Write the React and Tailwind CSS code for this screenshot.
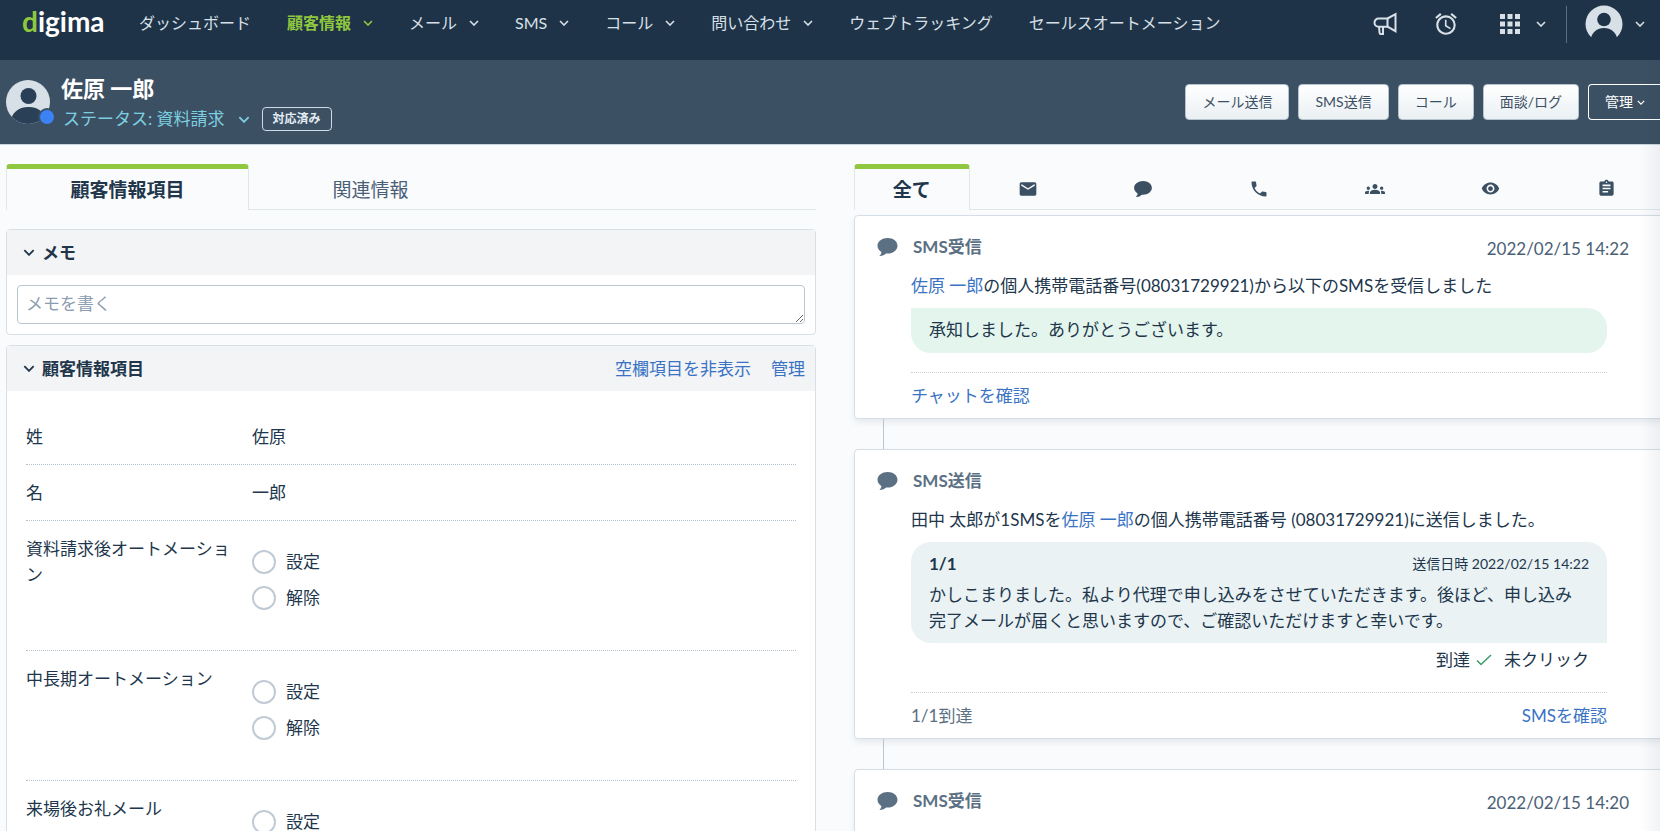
import React from 'react';
import { MdAlarm, MdApps, MdAssignment, MdEmail, MdGroups, MdPhone, MdVisibility } from 'react-icons/md';

const NAV_ITEMS = [
  { label: 'ダッシュボード' },
  { label: '顧客情報', menu: true, active: true },
  { label: 'メール', menu: true },
  { label: 'SMS', menu: true },
  { label: 'コール', menu: true },
  { label: '問い合わせ', menu: true },
  { label: 'ウェブトラッキング' },
  { label: 'セールスオートメーション' },
];

const ACTIONS = ['メール送信', 'SMS送信', 'コール', '面談/ログ'];

const FIELDS = [
  { label: '姓', value: '佐原' },
  { label: '名', value: '一郎' },
  { label: '資料請求後オートメーション', options: ['設定', '解除'] },
  { label: '中長期オートメーション', options: ['設定', '解除'] },
  { label: '来場後お礼メール', options: ['設定', '解除'] },
];

const TIMELINE_TABS = [
  { name: 'メール', icon: <MdEmail size={20} /> },
  { name: 'SMS', icon: <CommentIcon className="w-[18px] h-4" /> },
  { name: 'コール', icon: <MdPhone size={20} /> },
  { name: '面談', icon: <MdGroups size={20} /> },
  { name: '閲覧', icon: <MdVisibility size={19} /> },
  { name: 'ログ', icon: <MdAssignment size={19} /> },
];

function Chevron({ className }) {
  return (
    <svg viewBox="0 0 10 6" fill="none" stroke="currentColor" strokeWidth="1.6" className={className} aria-hidden="true">
      <path d="M1 1l4 4 4-4" />
    </svg>
  );
}

function CommentIcon({ className }) {
  return (
    <svg viewBox="0 0 20 18" fill="currentColor" className={className} aria-hidden="true">
      <path d="M10.2 0C4.700 0 0 3.300 0 7.700c0 2.600 1.500 4.900 3.900 6.300.1 1.200-.7 2.600-2 3.900 3 .1 5-.8 6.600-2.500.5.1 1.100.1 1.700.1C15.700 15.500 20 12 20 7.700S15.700 0 10.200 0z" />
    </svg>
  );
}

function MegaphoneIcon() {
  return (
    <svg viewBox="0 0 24 24" fill="none" stroke="currentColor" strokeWidth="2" className="w-6 h-6" aria-hidden="true">
      <path d="M14.500 6.500h-9a4 4 0 0 0-4 4v.2a4 4 0 0 0 4 4h9z" />
      <path d="M14.500 6.500L22.500 2.200v17l-8-4.500" />
      <path d="M6 14.700l.6 6.300a1 1 0 0 0 1 1h2.400v-7.300" />
    </svg>
  );
}

function Header() {
  return (
    <header className="flex items-start h-[60px] pl-[22px] pr-[15px] bg-[#1f3348] text-[#d8e0e7]">
      <a href="#" className="w-[81px] shrink-0 mt-1 text-[28px] leading-[34px] font-bold text-white">
        <span className="text-[#8fc73e]">d</span>igima
      </a>
      <nav className="flex gap-9 ml-9 h-[46px] items-center text-[16px] whitespace-nowrap">
        {NAV_ITEMS.map((item) => (
          <a
            key={item.label}
            href="#"
            className={item.active ? 'flex items-center font-bold text-[#8fc73e]' : 'flex items-center'}
          >
            {item.label}
            {item.menu && <Chevron className="ml-3 w-2.5 h-1.5" />}
          </a>
        ))}
      </nav>
      <div className="flex items-center ml-auto h-12">
        <button aria-label="お知らせ"><MegaphoneIcon /></button>
        <button aria-label="リマインダー" className="ml-9"><MdAlarm size={26} /></button>
        <button aria-label="アプリ" className="flex items-center ml-9">
          <MdApps size={30} />
          <Chevron className="ml-[11px] w-2.5 h-1.5" />
        </button>
        <span className="ml-5 h-[37px] w-px bg-[#5b7083]" />
        <button aria-label="アカウント" className="flex items-center ml-[18px]">
          <svg viewBox="0 0 38 38" className="w-[38px] h-[38px]" aria-hidden="true">
            <circle cx="19" cy="19" r="18.500" fill="#d8e0e7" />
            <circle cx="19" cy="14.500" r="6.800" fill="#1f3348" />
            <path d="M5 38c.5-9.500 6-15 14-15s13.500 5.500 14 15z" fill="#1f3348" />
          </svg>
          <Chevron className="ml-3 w-2.5 h-1.5" />
        </button>
      </div>
    </header>
  );
}

function CustomerBar() {
  return (
    <section className="flex items-center h-[85px] pl-1.5 bg-[#3c5064] border-b border-[#cbd6de]">
      <div className="relative shrink-0 w-[50px]">
        <svg viewBox="0 0 44 44" className="w-11 h-11" aria-hidden="true">
          <clipPath id="face"><circle cx="22" cy="22" r="22" /></clipPath>
          <g clipPath="url(#face)">
            <rect width="44" height="44" fill="#d8e0e7" />
            <circle cx="22.500" cy="16" r="8" fill="#2a4056" />
            <path d="M4 44c1-11 8-17 18.500-17S40 33 41 44z" fill="#2a4056" />
          </g>
        </svg>
        <span className="absolute -bottom-0.5 right-0 w-[18px] h-[18px] rounded-full bg-[#3b82f6] border-2 border-[#3c5064]" />
      </div>
      <div className="ml-[5px] whitespace-nowrap">
        <h1 className="text-[22px] leading-[34px] font-bold text-white">佐原 一郎</h1>
        <div className="flex items-center ml-0.5">
          <button className="flex items-center text-[17px] leading-[26px] text-[#7ccfe0]">
            ステータス: 資料請求
            <Chevron className="ml-[13px] w-3 h-[7px]" />
          </button>
          <span className="ml-3 px-2.5 border border-[#cbdbe8] rounded text-[12px] leading-[22px] font-bold text-[#e3ecf3]">
            対応済み
          </span>
        </div>
      </div>
      <div className="flex gap-[9px] ml-auto text-[14px] whitespace-nowrap">
        {ACTIONS.map((action) => (
          <button
            key={action}
            className="h-9 px-4 border border-[#b5c3cf] rounded bg-gradient-to-b from-white to-[#eaf0f3] text-[#3c5064]"
          >
            {action}
          </button>
        ))}
        <button className="flex items-center h-9 pl-4 pr-[15px] border border-r-0 border-white rounded-l text-white">
          管理
          <Chevron className="ml-1 w-2 h-[5px]" />
        </button>
      </div>
    </section>
  );
}

function PanelTitle({ children }) {
  return (
    <button className="flex items-center gap-[7px] font-bold">
      <Chevron className="w-3 h-[7px]" />
      {children}
    </button>
  );
}

function Field({ field, index }) {
  return (
    <div className="flex pt-[15px] pb-3.5 border-b border-dotted border-[#b4c2ce]">
      <div className="shrink-0 w-[226px] pr-5" id={`field-${index}`}>{field.label}</div>
      {field.value && <div>{field.value}</div>}
      {field.options && (
        <div role="radiogroup" aria-labelledby={`field-${index}`} className="flex flex-col gap-3 pt-[14px] pb-[26px]">
          {field.options.map((option) => (
            <label key={option} className="flex items-center gap-2.5 h-6">
              <input
                type="radio"
                name={`field-${index}`}
                className="appearance-none w-6 h-6 rounded-full border-2 border-[#c0cbd5] bg-white checked:border-8"
              />
              {option}
            </label>
          ))}
        </div>
      )}
    </div>
  );
}

function CustomerPanel() {
  return (
    <div>
      <div role="tablist" className="flex text-[19px]">
        <button
          role="tab"
          aria-selected="true"
          className="w-[30%] h-[46px] border-x border-t-[5px] border-x-[#dfe6ea] border-t-[#8fc73e] rounded-t font-bold"
        >
          顧客情報項目
        </button>
        <button role="tab" aria-selected="false" className="w-[30%] pt-1.5 border-b border-[#dfe6ea] text-[#4a6076]">
          関連情報
        </button>
        <div className="flex-1 border-b border-[#dfe6ea]" />
      </div>

      {/* メモ */}
      <section className="mt-[19px] border border-[#d8dfe5] rounded bg-white">
        <div className="flex items-center h-[45px] px-4 bg-[#f3f4f6]">
          <PanelTitle>メモ</PanelTitle>
        </div>
        <div className="flex p-2.5">
          <textarea
            rows={1}
            aria-label="メモ"
            placeholder="メモを書く"
            className="w-full h-[39px] px-2 py-[5px] border border-[#bac6d0] rounded bg-white placeholder:text-[#8b9db0]"
          />
        </div>
      </section>

      {/* 顧客情報 */}
      <section className="mt-2.5 border border-[#d8dfe5] rounded bg-white">
        <div className="flex items-center h-[45px] pl-4 pr-2.5 bg-[#f3f4f6]">
          <PanelTitle>顧客情報項目</PanelTitle>
          <a href="#" className="ml-auto text-[#3a73c4]">空欄項目を非表示</a>
          <a href="#" className="ml-5 text-[#3a73c4]">管理</a>
        </div>
        <div className="pt-[18px] px-[19px]">
          {FIELDS.map((field, i) => <Field key={field.label} field={field} index={i} />)}
        </div>
      </section>
    </div>
  );
}

function TimelineCard({ title, date, children }) {
  return (
    <li className="group">
      <article className="border border-[#d5dee6] rounded bg-white shadow-[0_4px_6px_rgba(90,120,140,0.12)]">
        <div className="flex items-center h-11 pl-[22px] pr-[34px] pt-[18px] text-[#5b7083]">
          <CommentIcon className="w-[21px] h-[18px]" />
          <h2 className="ml-[15px] font-bold">{title}</h2>
          {date && <time className="ml-auto pt-1 text-[#4a6076]">{date}</time>}
        </div>
        <div className="px-14 pt-[13px] pb-[9px]">{children}</div>
      </article>
      <div className="ml-[29px] w-px h-[30px] bg-[#b9c5cf] group-last:hidden" />
    </li>
  );
}

function CardFooter({ children }) {
  return (
    <div className="flex justify-between mt-[19px] pt-2.5 border-t border-dotted border-[#c5d0d9] text-[#5b7083]">
      {children}
    </div>
  );
}

function Timeline() {
  return (
    <div className="min-w-0">
      <div role="tablist" className="grid grid-cols-7 h-[46px] text-[#3c5064]">
        <button
          role="tab"
          aria-selected="true"
          className="border-x border-t-[5px] border-x-[#dfe6ea] border-t-[#8fc73e] rounded-t text-[19px] font-bold text-[#21364b]"
        >
          全て
        </button>
        {TIMELINE_TABS.map((tab) => (
          <button
            key={tab.name}
            role="tab"
            aria-selected="false"
            aria-label={tab.name}
            className="flex items-center justify-center pt-1 border-b border-[#dfe6ea]"
          >
            {tab.icon}
          </button>
        ))}
      </div>
      <ol className="mt-[5px]">
        <TimelineCard title="SMS受信" date="2022/02/15 14:22">
          <p><a href="#" className="text-[#3a73c4]">佐原 一郎</a>の個人携帯電話番号(08031729921)から以下のSMSを受信しました</p>
          <p className="mt-[9px] px-[18px] pt-[9px] pb-2.5 rounded-[20px] rounded-tl-none bg-[#e4f5ed]">
            承知しました。ありがとうございます。
          </p>
          <CardFooter>
            <a href="#" className="text-[#3a73c4]">チャットを確認</a>
          </CardFooter>
        </TimelineCard>

        <TimelineCard title="SMS送信">
          <p>田中 太郎が1SMSを<a href="#" className="text-[#3a73c4]">佐原 一郎</a>の個人携帯電話番号 (08031729921)に送信しました。</p>
          <div className="mt-[9px] px-[18px] py-[9px] rounded-[20px] rounded-br-none bg-[#eaf2f4]">
            <div className="flex justify-between">
              <strong>1/1</strong>
              <span className="text-[14px]">送信日時 2022/02/15 14:22</span>
            </div>
            <p className="mt-[5px]">
              かしこまりました。私より代理で申し込みをさせていただきます。後ほど、申し込み完了メールが届くと思いますので、ご確認いただけますと幸いです。
            </p>
          </div>
          <div className="flex items-center justify-end pt-1 pr-[18px]">
            到達
            <svg viewBox="0 0 16 12" fill="none" stroke="#3f9c6b" strokeWidth="1.600" className="ml-1.5 mr-3 w-4 h-3" aria-hidden="true">
              <path d="M1 6.500l4 4L15 1" />
            </svg>
            未クリック
          </div>
          <CardFooter>
            <span>1/1到達</span>
            <a href="#" className="text-[#3a73c4]">SMSを確認</a>
          </CardFooter>
        </TimelineCard>

        <TimelineCard title="SMS受信" date="2022/02/15 14:20" />
      </ol>
    </div>
  );
}

export default function App() {
  return (
    <div className="relative h-screen overflow-hidden bg-[#fafbfd] font-['Lato','Noto_Sans_CJK_JP',sans-serif] text-[17px] leading-[26px] text-[#21364b]">
      <Header />
      <CustomerBar />
      <main className="grid grid-cols-2 gap-[38px] pt-[19px] pl-1.5 -mr-1">
        <CustomerPanel />
        <Timeline />
      </main>
      <div className="absolute inset-y-0 right-0 w-5 bg-gradient-to-r from-transparent to-[#1f3348]/6 pointer-events-none" />
    </div>
  );
}
